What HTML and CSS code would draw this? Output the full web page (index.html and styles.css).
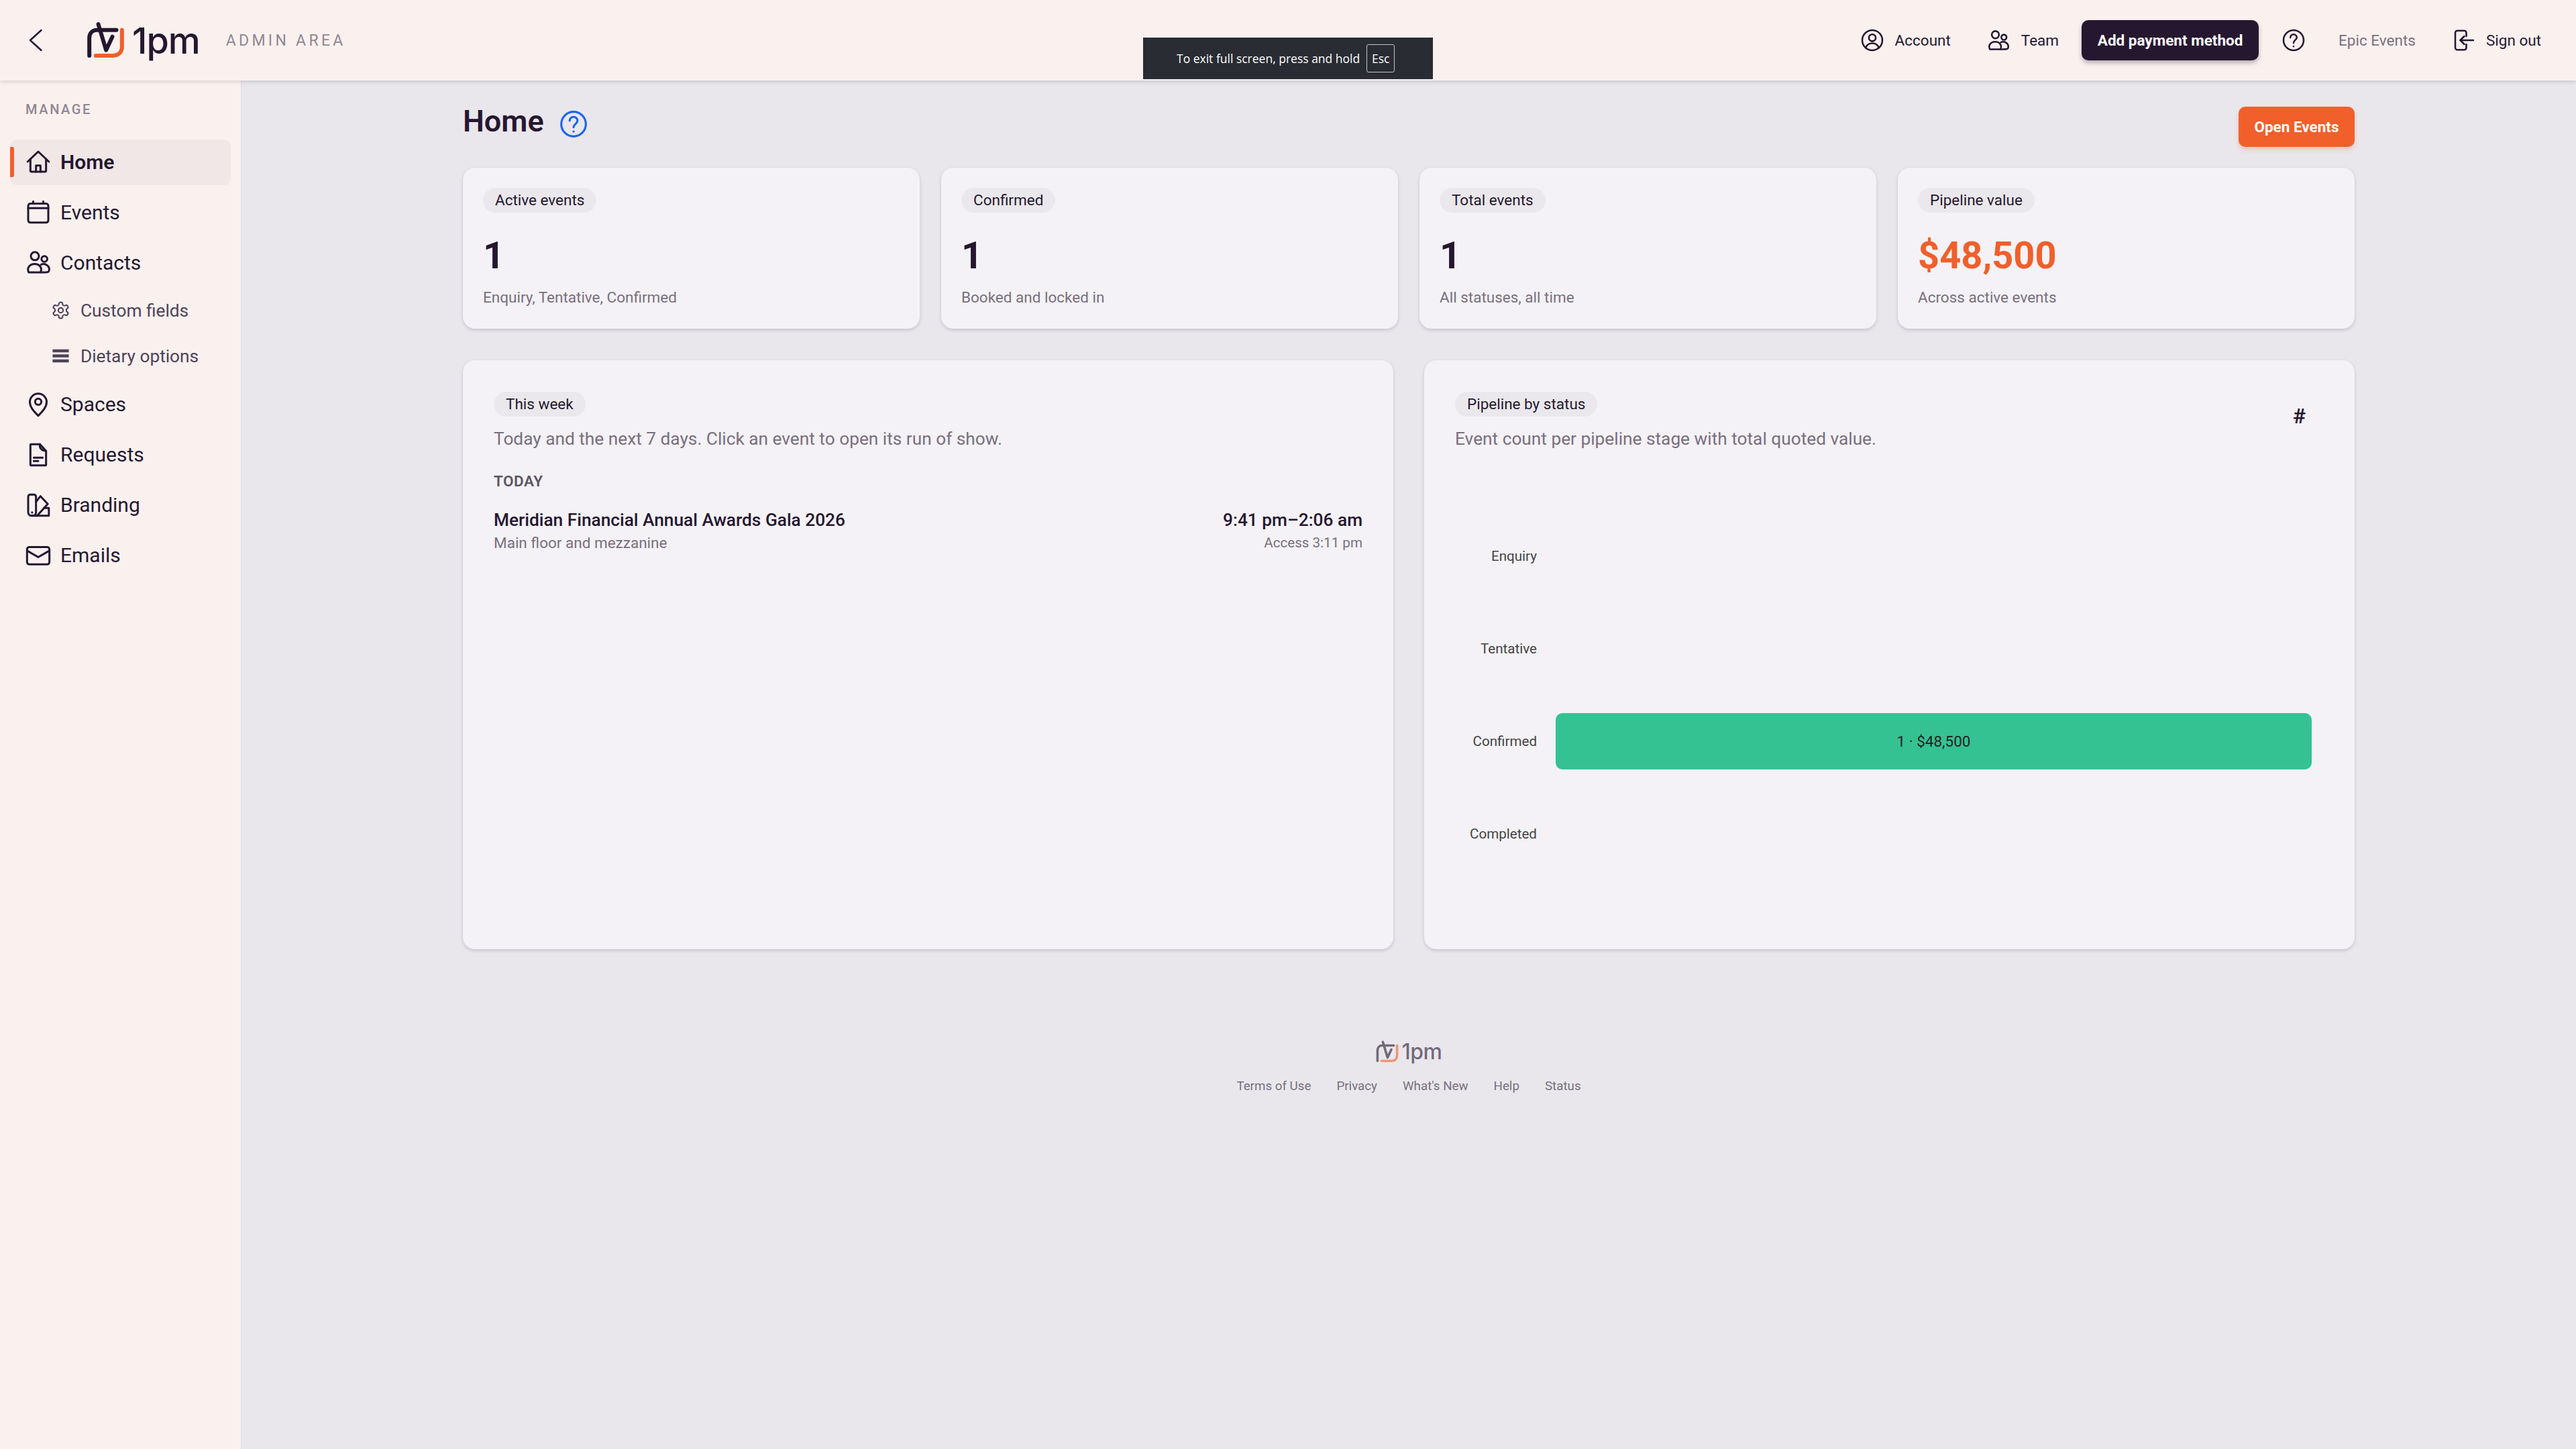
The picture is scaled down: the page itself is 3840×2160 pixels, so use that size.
FILE: index.html
```html
<!DOCTYPE html>
<html lang="en">
<head>
    <meta charset="UTF-8">
    <meta name="viewport" content="width=device-width, initial-scale=1.0">
    <title>1pm Admin Area</title>
    <link rel="stylesheet" href="styles.css">
</head>
<body>
    <svg class="icon-defs" xmlns="http://www.w3.org/2000/svg">
        <symbol id="logo-mark" viewBox="85 60 170 165">
            <path class="logo-dark" d="M97 210V132C97 108 112 95 132 95H218"/>
            <path class="logo-dark" d="M137 69L172 185L200 125"/>
            <path class="logo-orange" d="M243 95V170C243 195 226 210 203 210H126"/>
        </symbol>
        <symbol id="i-users" viewBox="0 0 24 24">
            <circle cx="9" cy="6.5" r="3.6"/>
            <circle cx="17.5" cy="9" r="2.6"/>
            <path d="M3.5 21C1.5 17 4.5 13.5 8.8 13.5S16 17 14 21Z"/>
            <path d="M14.5 14C18.5 12.5 23 15.5 21.5 20C21 21 20 21 14.5 21"/>
        </symbol>
        <symbol id="i-help" viewBox="0 0 24 24">
            <circle cx="12" cy="12" r="10"/>
            <path d="M8.8 9.3A3.2 3.2 0 0 1 15.2 9.3C15.2 11.6 12 12 12 14.6"/>
            <path d="M12 18v.1"/>
        </symbol>
    </svg>

    <header class="topbar">
        <div class="brand">
            <svg class="back-icon" viewBox="0 0 24 24"><path d="M17 2L6 12L17 22"/></svg>
            <a class="logo">
                <svg class="logo-mark"><use href="#logo-mark"/></svg>
                <span class="logo-text">1pm</span>
            </a>
            <span class="admin-label">ADMIN AREA</span>
        </div>
        <nav class="top-nav">
            <a class="top-link">
                <svg class="top-icon" viewBox="0 0 24 24">
                    <circle cx="12" cy="12" r="10"/>
                    <circle cx="12" cy="9.5" r="3.4"/>
                    <path d="M5.5 19.5C6.5 16.5 9 15 12 15S17.5 16.5 18.5 19.5"/>
                </svg>
                Account
            </a>
            <a class="top-link">
                <svg class="top-icon"><use href="#i-users"/></svg>
                Team
            </a>
            <button class="btn btn-dark">Add payment method</button>
            <svg class="top-icon top-help"><use href="#i-help"/></svg>
            <span class="org-name">Epic Events</span>
            <a class="top-link">
                <svg class="top-icon" viewBox="0 0 24 24">
                    <path d="M15 8V4.5A2 2 0 0 0 13 2.5H6A2 2 0 0 0 4 4.5V19.5A2 2 0 0 0 6 21.5H13A2 2 0 0 0 15 19.5V16"/>
                    <path d="M22 12H9"/>
                    <path d="M13 8L9 12L13 16"/>
                </svg>
                Sign out
            </a>
        </nav>
    </header>

    <div class="fullscreen-toast">
        <span>To exit full screen, press and hold</span>
        <span class="esc-key">Esc</span>
    </div>

    <div class="layout">
        <aside class="sidebar">
            <div class="side-heading">MANAGE</div>
            <a class="side-item active">
                <svg class="side-icon" viewBox="0 0 24 24">
                    <path d="M2.5 12L12 3L21.5 12"/>
                    <path d="M5 9.8V20A1 1 0 0 0 6 21H18A1 1 0 0 0 19 20V9.8"/>
                    <path d="M10 21V15.5H14V21"/>
                </svg>
                Home
            </a>
            <a class="side-item">
                <svg class="side-icon" viewBox="0 0 24 24">
                    <rect x="3" y="4.5" width="18" height="17" rx="2"/>
                    <path d="M3 8.5H21"/>
                    <path d="M7.5 2.5V4.5M16.5 2.5V4.5"/>
                </svg>
                Events
            </a>
            <a class="side-item">
                <svg class="side-icon"><use href="#i-users"/></svg>
                Contacts
            </a>
            <a class="side-sub">
                <svg class="sub-icon" viewBox="0 0 24 24">
                    <path d="M12.22 2h-.44a2 2 0 0 0-2 2v.18a2 2 0 0 1-1 1.73l-.43.25a2 2 0 0 1-2 0l-.15-.08a2 2 0 0 0-2.73.73l-.22.38a2 2 0 0 0 .73 2.73l.15.1a2 2 0 0 1 1 1.72v.51a2 2 0 0 1-1 1.74l-.15.09a2 2 0 0 0-.73 2.73l.22.38a2 2 0 0 0 2.73.73l.15-.08a2 2 0 0 1 2 0l.43.25a2 2 0 0 1 1 1.73V20a2 2 0 0 0 2 2h.44a2 2 0 0 0 2-2v-.18a2 2 0 0 1 1-1.73l.43-.25a2 2 0 0 1 2 0l.15.08a2 2 0 0 0 2.73-.73l.22-.39a2 2 0 0 0-.73-2.73l-.15-.08a2 2 0 0 1-1-1.74v-.5a2 2 0 0 1 1-1.74l.15-.09a2 2 0 0 0 .73-2.73l-.22-.38a2 2 0 0 0-2.73-.73l-.15.08a2 2 0 0 1-2 0l-.43-.25a2 2 0 0 1-1-1.73V4a2 2 0 0 0-2-2z"/>
                    <circle cx="12" cy="12" r="3"/>
                </svg>
                Custom fields
            </a>
            <a class="side-sub">
                <svg class="sub-icon sub-icon-bold" viewBox="0 0 24 24">
                    <path d="M2 5.8H22M2 12H22M2 18.2H22"/>
                </svg>
                Dietary options
            </a>
            <a class="side-item">
                <svg class="side-icon" viewBox="0 0 24 24">
                    <path d="M12 22C7.5 17.5 4.5 14 4.5 9.8A7.5 7.5 0 0 1 19.5 9.8C19.5 14 16.5 17.5 12 22Z"/>
                    <circle cx="12" cy="9.5" r="2.8"/>
                </svg>
                Spaces
            </a>
            <a class="side-item">
                <svg class="side-icon" viewBox="0 0 24 24">
                    <path d="M5.5 2.5H13.5L19 8.5V20.5A1 1 0 0 1 18 21.5H6A1 1 0 0 1 5 20.5V3A.5.5 0 0 1 5.5 2.5Z"/>
                    <path d="M13.5 2.5C13 6 15 8.5 19 8.5"/>
                    <path d="M8 14.5H16M8 17.5H12"/>
                </svg>
                Requests
            </a>
            <a class="side-item">
                <svg class="side-icon" viewBox="0 0 24 24">
                    <path d="M3 4.5A2 2 0 0 1 5 2.5H8A2 2 0 0 1 10 4.5V18.5A3 3 0 0 1 7 21.5H6A3 3 0 0 1 3 18.5Z"/>
                    <path d="M10 9L14 4L20.5 11L11 21.5"/>
                    <path d="M17 14.5H21.5V21.5H7"/>
                    <path d="M6.5 18.5v.1"/>
                </svg>
                Branding
            </a>
            <a class="side-item">
                <svg class="side-icon" viewBox="0 0 24 24">
                    <rect x="2" y="4.5" width="20" height="15.5" rx="2"/>
                    <path d="M2.5 8L12 13.5L21.5 8"/>
                </svg>
                Emails
            </a>
        </aside>

        <main class="main">
            <div class="page-head">
                <div class="page-title">
                    <h1>Home</h1>
                    <svg class="title-help"><use href="#i-help"/></svg>
                </div>
                <button class="btn btn-orange">Open Events</button>
            </div>

            <section class="stats">
                <div class="card stat">
                    <span class="chip">Active events</span>
                    <div class="stat-value">1</div>
                    <div class="stat-note">Enquiry, Tentative, Confirmed</div>
                </div>
                <div class="card stat">
                    <span class="chip">Confirmed</span>
                    <div class="stat-value">1</div>
                    <div class="stat-note">Booked and locked in</div>
                </div>
                <div class="card stat">
                    <span class="chip">Total events</span>
                    <div class="stat-value">1</div>
                    <div class="stat-note">All statuses, all time</div>
                </div>
                <div class="card stat">
                    <span class="chip">Pipeline value</span>
                    <div class="stat-value stat-orange">$48,500</div>
                    <div class="stat-note">Across active events</div>
                </div>
            </section>

            <section class="panels">
                <div class="card panel">
                    <span class="chip">This week</span>
                    <p class="panel-desc">Today and the next 7 days. Click an event to open its run of show.</p>
                    <h3 class="day-label">TODAY</h3>
                    <div class="event-row">
                        <div>
                            <div class="event-name">Meridian Financial Annual Awards Gala 2026</div>
                            <div class="event-meta">Main floor and mezzanine</div>
                        </div>
                        <div class="event-times">
                            <div class="event-name">9:41 pm–2:06 am</div>
                            <div class="event-meta event-access">Access 3:11 pm</div>
                        </div>
                    </div>
                </div>
                <div class="card panel">
                    <div class="panel-head">
                        <div>
                            <span class="chip">Pipeline by status</span>
                            <p class="panel-desc">Event count per pipeline stage with total quoted value.</p>
                        </div>
                        <span class="hash">#</span>
                    </div>
                    <div class="chart">
                        <div class="chart-label">Enquiry</div>
                        <div></div>
                        <div class="chart-label">Tentative</div>
                        <div></div>
                        <div class="chart-label">Confirmed</div>
                        <div class="chart-bar">1 · $48,500</div>
                        <div class="chart-label">Completed</div>
                        <div></div>
                    </div>
                </div>
            </section>

            <footer class="footer">
                <a class="logo logo-small">
                    <svg class="logo-mark"><use href="#logo-mark"/></svg>
                    <span class="logo-text">1pm</span>
                </a>
                <div class="footer-links">
                    <a>Terms of Use</a>
                    <a>Privacy</a>
                    <a>What's New</a>
                    <a>Help</a>
                    <a>Status</a>
                </div>
            </footer>
        </main>
    </div>
</body>
</html>
```

FILE: styles.css
```css
* {
    box-sizing: border-box;
}
body {
    margin: 0;
    width: 3840px;
    height: 2160px;
    overflow: hidden;
    display: flex;
    flex-direction: column;
    font-family: Roboto, sans-serif;
    background: #e9e7ec;
    color: #261730;
}
svg {
    display: block;
    flex: none;
    fill: none;
    stroke: currentColor;
    stroke-linecap: round;
    stroke-linejoin: round;
}
.icon-defs {
    display: none;
}
.topbar {
    position: relative;
    z-index: 2;
    height: 120px;
    flex: none;
    display: flex;
    align-items: center;
    justify-content: space-between;
    padding: 0 52px 0 36px;
    background: #faf1ef;
    box-shadow: 0 2px 6px rgba(38, 23, 48, 0.16);
}
.brand {
    display: flex;
    align-items: center;
}
.back-icon {
    width: 36px;
    height: 36px;
    stroke-width: 1.7;
    margin-right: 57px;
}
.logo {
    display: flex;
    align-items: center;
    gap: 11px;
}
.logo-mark {
    width: 57px;
    height: 55px;
    stroke-width: 18;
}
.logo-dark {
    stroke: #261730;
}
.logo-orange {
    stroke: #f15f2b;
}
.logo-text {
    font-family: Inter, sans-serif;
    font-size: 54px;
    line-height: 55px;
    font-weight: 500;
    letter-spacing: -1px;
    color: #261730;
}
.admin-label {
    margin-left: 39px;
    font-size: 23px;
    letter-spacing: 4.3px;
    color: #918691;
}
.top-nav {
    display: flex;
    align-items: center;
    font-size: 22.5px;
}
.top-link {
    display: flex;
    align-items: center;
    gap: 16px;
    margin-right: 50px;
}
.top-link:first-child {
    margin-right: 53px;
}
.top-link:last-child {
    margin-right: 0;
}
.top-icon {
    width: 36px;
    height: 36px;
    stroke-width: 1.7;
}
.top-help {
    margin: 0 49px 0 34px;
}
.org-name {
    color: #7a6f7e;
    margin-right: 53px;
}
.btn {
    height: 60px;
    border: none;
    border-radius: 10px;
    font-family: Roboto, sans-serif;
    font-size: 22.5px;
    font-weight: 700;
    color: #fff;
}
.btn-dark {
    width: 264px;
    margin-left: -16px;
    background: #261730;
    box-shadow: 0 4px 6px rgba(38, 23, 48, 0.3);
}
.btn-orange {
    width: 173px;
    background: #f15f2b;
    box-shadow: 0 4px 6px rgba(241, 95, 43, 0.25);
}
.fullscreen-toast {
    position: fixed;
    z-index: 5;
    left: 1704px;
    top: 56px;
    width: 432px;
    height: 62px;
    display: flex;
    align-items: center;
    gap: 10px;
    padding-left: 50px;
    background: #292c33;
    color: #fff;
    font-family: "Open Sans", sans-serif;
    font-size: 17.5px;
}
.esc-key {
    width: 42px;
    height: 42px;
    display: flex;
    align-items: center;
    justify-content: center;
    border: 1.5px solid #c4c4c4;
    border-radius: 3px;
}
.layout {
    flex: 1;
    display: flex;
    min-height: 0;
}
.sidebar {
    width: 360px;
    flex: none;
    padding: 27.5px 15px 0;
    background: #faf1ef;
    border-right: 1px solid #e0dadd;
}
.side-heading {
    margin: 0 0 30.5px 23px;
    font-size: 20px;
    line-height: 30px;
    font-weight: 500;
    letter-spacing: 2.6px;
    color: #918691;
}
.side-item {
    position: relative;
    height: 68px;
    margin-bottom: 7px;
    display: flex;
    align-items: center;
    gap: 13px;
    padding: 0 0 2px 22px;
    border-radius: 10px;
    font-size: 30px;
}
.side-item.active {
    background: #f0e7e6;
    font-weight: 600;
}
.side-item.active::before {
    content: "";
    position: absolute;
    left: 0;
    top: 11px;
    width: 6px;
    height: 45px;
    border-radius: 0 3px 3px 0;
    background: #f15f2b;
}
.side-icon {
    width: 40px;
    height: 40px;
    stroke-width: 1.8;
}
.side-sub {
    height: 68px;
    display: flex;
    align-items: center;
    gap: 15.4px;
    padding: 0 0 2px 60.6px;
    font-size: 26.25px;
    color: #4f4358;
}
.side-sub + .side-item {
    margin-top: 4px;
}
.side-sub:nth-of-type(4) {
    margin-top: -3.5px;
}
.sub-icon {
    width: 29px;
    height: 29px;
    stroke-width: 1.7;
}
.sub-icon-bold {
    stroke-width: 3.6;
    stroke-linecap: butt;
}
.main {
    flex: 1;
    padding: 39px 330px 0;
}
.page-head {
    display: flex;
    align-items: flex-start;
    justify-content: space-between;
    margin-bottom: 31px;
}
.page-title {
    display: flex;
    align-items: flex-start;
    gap: 22px;
}
.page-title h1 {
    margin: 1px 0 0;
    font-size: 45px;
    line-height: 42px;
    font-weight: 600;
}
.title-help {
    width: 44px;
    height: 44px;
    stroke-width: 1.7;
    color: #1a66f0;
    margin-top: 4px;
}
.stats {
    display: grid;
    grid-template-columns: repeat(4, 1fr);
    gap: 32px;
    margin-bottom: 47px;
}
.card {
    background: #f4f2f7;
    border-radius: 18px;
    box-shadow: 0 2px 5px rgba(38, 23, 48, 0.18);
}
.stat {
    height: 240px;
    padding: 30px 30px 0;
}
.chip {
    display: inline-block;
    height: 37px;
    padding: 0 18px;
    border-radius: 19px;
    background: #eae8ec;
    font-size: 22.5px;
    line-height: 37px;
}
.stat-value {
    margin-top: 31px;
    font-size: 56px;
    line-height: 66px;
    font-weight: 700;
}
.stat-orange {
    color: #f15f2b;
}
.stat-note {
    margin-top: 14px;
    font-size: 22.5px;
    line-height: 30px;
    color: #7a6f7e;
}
.panels {
    display: grid;
    grid-template-columns: 1fr 1fr;
    gap: 46px;
}
.panel {
    height: 878px;
    padding: 47px 46px 0;
}
.panel-desc {
    margin: 16px 0 0;
    font-size: 26.25px;
    line-height: 34px;
    color: #7a6f7e;
}
.day-label {
    margin: 32px 0 0;
    font-size: 22.5px;
    line-height: 28px;
    font-weight: 600;
    letter-spacing: 0.5px;
    color: #5e5463;
}
.event-row {
    display: flex;
    justify-content: space-between;
    margin-top: 27px;
}
.event-times {
    text-align: right;
}
.event-name {
    font-size: 26.25px;
    line-height: 34px;
    font-weight: 500;
}
.event-meta {
    margin-top: 3px;
    font-size: 22.5px;
    line-height: 28px;
    color: #7a6f7e;
}
.event-access {
    font-size: 20.6px;
}
.panel-head {
    display: flex;
    justify-content: space-between;
    align-items: flex-start;
}
.hash {
    margin: 17px 27px 0 0;
    font-size: 32px;
    line-height: 38px;
    font-weight: 600;
}
.chart {
    display: grid;
    grid-template-columns: 122px 1fr;
    grid-auto-rows: 138px;
    column-gap: 28px;
    align-items: center;
    margin: 89px 18px 0 0;
}
.chart-label {
    text-align: right;
    font-size: 20.6px;
    color: #444;
}
.chart-bar {
    height: 84px;
    display: flex;
    align-items: center;
    justify-content: center;
    border-radius: 10px;
    background: #34c292;
    font-size: 22.5px;
    color: #222;
}
.footer {
    margin-top: 136px;
    display: flex;
    flex-direction: column;
    align-items: center;
}
.logo-small {
    gap: 5px;
    opacity: 0.6;
}
.logo-small .logo-mark {
    width: 34px;
    height: 34px;
}
.logo-small .logo-text {
    font-size: 32px;
    line-height: 34px;
    letter-spacing: -0.5px;
}
.footer-links {
    display: flex;
    gap: 38px;
    margin-top: 22px;
    font-size: 18.75px;
    line-height: 24px;
    color: #77707f;
}
```
